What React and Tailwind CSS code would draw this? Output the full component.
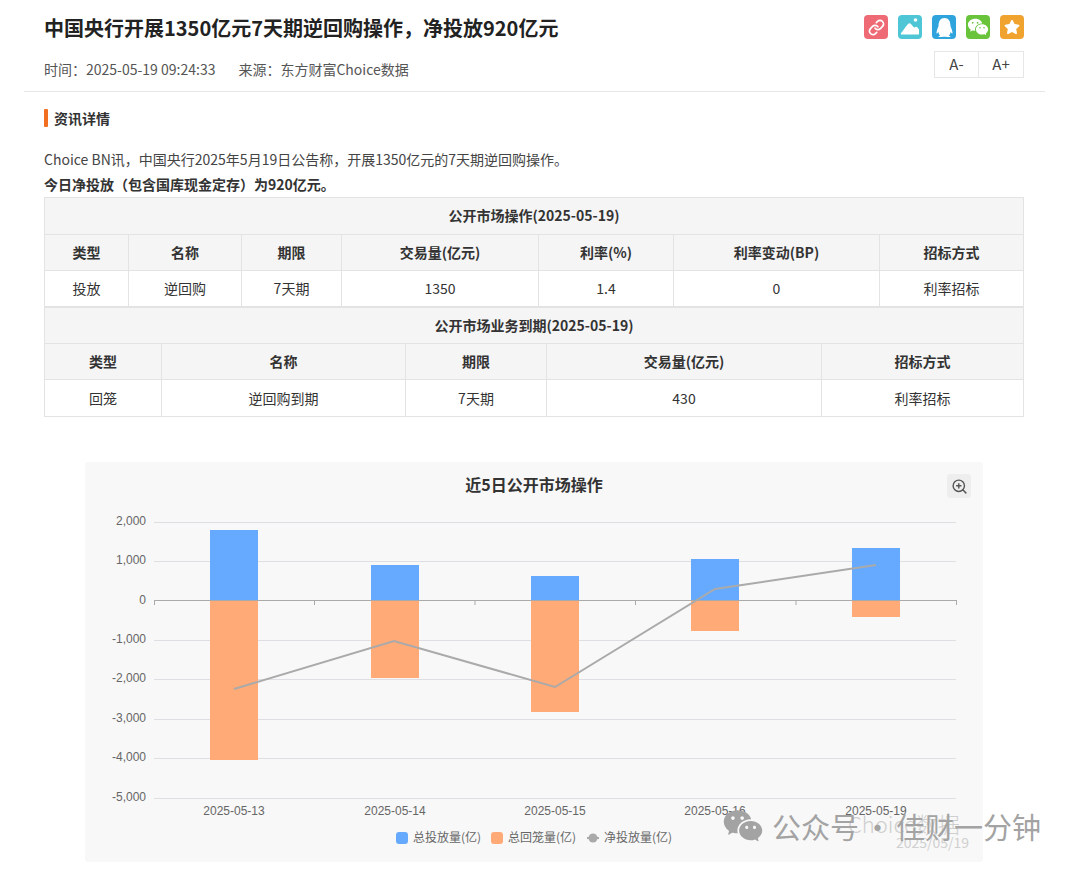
import { Link, ZoomIn } from "lucide-react";
import { FaQq, FaStar } from "react-icons/fa";
import { RiWechatFill } from "react-icons/ri";

const op = [
  ["类型", 84], ["名称", 113], ["期限", 100], ["交易量(亿元)", 197], ["利率(%)", 135], ["利率变动(BP)", 206], ["招标方式", 144],
];
const opRow = ["投放", "逆回购", "7天期", "1350", "1.4", "0", "利率招标"];
const due = [
  ["类型", 117], ["名称", 244], ["期限", 141], ["交易量(亿元)", 275], ["招标方式", 202],
];
const dueRow = ["回笼", "逆回购到期", "7天期", "430", "利率招标"];

function DataTable({ title, cols, row, date, titleRow, lastRow }) {
  return (
    <table className="w-[979px] table-fixed border-collapse text-[14px] text-[#333]">
      <colgroup>
        {cols.map(([name, w]) => (
          <col key={name} style={{ width: w }} />
        ))}
      </colgroup>
      <tbody>
        <tr className={titleRow}>
          <th colSpan={cols.length} className="border border-[#e3e3e3] bg-[#f5f5f5] pb-[1px] font-bold">
            {title}({date})
          </th>
        </tr>
        <tr className="h-[36px] bg-[#f5f5f5]">
          {cols.map(([name]) => (
            <th key={name} className="border border-[#e3e3e3] font-bold">{name}</th>
          ))}
        </tr>
        <tr className={lastRow}>
          {row.map((v, i) => (
            <td key={i} className="border border-[#e3e3e3] bg-white text-center">{v}</td>
          ))}
        </tr>
      </tbody>
    </table>
  );
}

const yTicks = [
  [2000, 522], [1000, 561], [0, 600.5], [-1000, 640], [-2000, 679], [-3000, 719], [-4000, 758], [-5000, 798],
];
const bars = [
  { x: 210, top: 530, bottom: 760, date: "2025-05-13" },
  { x: 371, top: 565, bottom: 678, date: "2025-05-14" },
  { x: 531, top: 576, bottom: 712, date: "2025-05-15" },
  { x: 691, top: 559, bottom: 631, date: "2025-05-16" },
  { x: 852, top: 548, bottom: 617, date: "2025-05-19" },
];

function Chart() {
  // svg coordinates are page coordinates, the viewBox starts at the chart box corner
  return (
    <svg viewBox="85 462 898 400" className="block h-[400px] w-[898px]" style={{ fontFamily: '"Liberation Sans", sans-serif' }}>
      {yTicks.map(([v, y]) => (
        <g key={v}>
          {v !== 0 && <line x1="154" x2="956" y1={y + 0.5} y2={y + 0.5} stroke="#dfdfe3" strokeWidth="1" />}
          <text x="146" y={y + 3} textAnchor="end" fontSize="12" fill="#666">
            {v.toLocaleString("en-US")}
          </text>
        </g>
      ))}
      {bars.map((b) => (
        <g key={b.date}>
          <rect x={b.x} y={b.top} width="48" height={600.5 - b.top} fill="#66aaff" />
          <rect x={b.x} y="600.5" width="48" height={b.bottom - 600.5} fill="#ffaa77" />
          <text x={b.x + 24} y="815" textAnchor="middle" fontSize="12" fill="#666">{b.date}</text>
        </g>
      ))}
      <line x1="154" x2="957" y1="600.5" y2="600.5" stroke="#aaa" strokeWidth="1" />
      {[154.5, 314.5, 475, 635.5, 796, 956.5].map((x) => (
        <line key={x} x1={x} x2={x} y1="600" y2="605" stroke="#aaa" strokeWidth="1" />
      ))}
      <polyline points="234,689 394,641 555,687 715,589 876,565" fill="none" stroke="#aaa" strokeWidth="2" />
      <text x="534" y="491" textAnchor="middle" fontSize="16" fontWeight="700" fill="#333" style={{ fontFamily: '"Noto Sans CJK SC", sans-serif' }}>
        近5日公开市场操作
      </text>
      <g fontSize="12" fill="#666" style={{ fontFamily: '"Noto Sans CJK SC", sans-serif' }}>
        <rect x="396" y="832" width="12" height="12" rx="3" fill="#66aaff" />
        <text x="413" y="842">总投放量(亿)</text>
        <rect x="491" y="832" width="12" height="12" rx="3" fill="#ffaa77" />
        <text x="508" y="842">总回笼量(亿)</text>
        <line x1="587" x2="599" y1="838" y2="838" stroke="#aaa" strokeWidth="2" />
        <circle cx="593" cy="838" r="4.5" fill="#aaa" />
        <text x="604" y="842">净投放量(亿)</text>
      </g>
    </svg>
  );
}

export default function App() {
  return (
    <div className="relative h-[869px] w-[1075px] overflow-hidden bg-white text-[#333]" style={{ fontFamily: '"Noto Sans CJK SC", sans-serif' }}>
      <header className="mr-[30px] ml-[24px] h-[92px] border-b border-[#e6e6e6] pr-[21px] pl-[20px]">
        <div className="flex h-[51px] items-start justify-between pt-[15px]">
          <h1 className="mt-[-5px] text-[20px] leading-[36px] font-bold text-[#222]">
            中国央行开展1350亿元7天期逆回购操作，净投放920亿元
          </h1>
          <div className="flex gap-[10px]">
            <span className="flex h-6 w-6 items-center justify-center rounded-[4px] bg-[#ee6a75] text-white">
              <Link size={17} strokeWidth={2.4} />
            </span>
            <span className="flex h-6 w-6 items-center justify-center rounded-[4px] bg-[#4fc6d6]">
              <svg viewBox="0 0 24 24" className="h-6 w-6" fill="#fff">
                <circle cx="17.5" cy="5" r="1.8" />
                <path d="M3 19.5 L3 18 C5 16 7 12 10 9 C11 8 12 8 13 9 L15.5 12 C16 12.6 16.8 12.4 17.4 12 C18.2 11.6 19 12 19.5 12.6 L21 14.5 L21 19.5 Z" />
              </svg>
            </span>
            <span className="flex h-6 w-6 items-center justify-center rounded-[4px] bg-[#2ea3dc] text-white">
              <FaQq size={19} />
            </span>
            <span className="flex h-6 w-6 items-center justify-center rounded-[4px] bg-[#69c43c] text-white">
              <RiWechatFill size={22} />
            </span>
            <span className="flex h-6 w-6 items-center justify-center rounded-[4px] bg-[#f0a32f] text-white">
              <FaStar size={16} />
            </span>
          </div>
        </div>
        <div className="flex items-start justify-between">
          <div className="mt-[7px] flex gap-[23px] text-[14px] leading-[22px] text-[#555]">
            <span>时间：2025-05-19 09:24:33</span>
            <span>来源：东方财富Choice数据</span>
          </div>
          <div className="flex h-[27px] w-[90px] border border-[#e6e6e6] text-[15px] text-[#444]">
            <button className="flex w-[44px] items-center justify-center border-r border-[#e6e6e6]">A-</button>
            <button className="flex flex-1 items-center justify-center">A+</button>
          </div>
        </div>
      </header>

      <main className="px-[44px]">
        <h2 className="mt-[17px] flex h-[18px] items-center gap-[6px] text-[14px] font-bold text-[#333]">
          <span className="h-[18px] w-[4px] rounded-[1px] bg-[#f26f21]" />
          资讯详情
        </h2>
        <p className="mt-[20px] text-[14px] leading-[25px] text-[#444]">
          Choice BN讯，中国央行2025年5月19日公告称，开展1350亿元的7天期逆回购操作。
        </p>
        <p className="text-[14px] leading-[25px] font-bold text-[#333]">今日净投放（包含国库现金定存）为920亿元。</p>
        <div className="flex flex-col">
          <DataTable title="公开市场操作" cols={op} row={opRow} date="2025-05-19" titleRow="h-[37px]" lastRow="h-[36px]" />
          <DataTable title="公开市场业务到期" cols={due} row={dueRow} date="2025-05-19" titleRow="h-[36px]" lastRow="h-[37px]" />
        </div>
        <div className="relative mt-[45px] ml-[41px] h-[400px] w-[898px] rounded-[3px] bg-[#f8f8f8]">
          <Chart />
          <span className="absolute top-[12px] right-[12px] flex h-6 w-6 items-center justify-center rounded-[3px] bg-[#eeeeee] text-[#555]">
            <ZoomIn size={17} />
          </span>
        </div>
      </main>

      <div className="absolute top-[809px] left-[848px] text-[22px] leading-[28px] font-light text-[#cfcfcf]">Choice数据</div>
      <div className="absolute top-[832px] left-[896px] text-[14px] leading-[20px] text-[#d0d0d0]">2025/05/19</div>
      <div className="absolute top-[805px] left-[722px] flex items-center text-[29px] leading-[40px] whitespace-nowrap text-[#a3a3a3]">
        <RiWechatFill size={42} />
        <span className="ml-[8px]">公众号</span>
        <span className="w-[37px] text-center">·</span>
        <span>佳财一分钟</span>
      </div>
    </div>
  );
}
